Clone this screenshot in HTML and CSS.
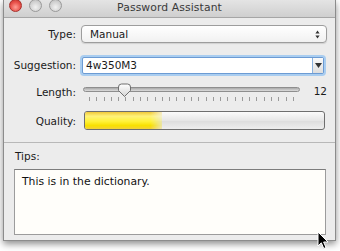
FILE: index.html
```html
<!DOCTYPE html>
<html>
<head>
<meta charset="utf-8">
<link rel="stylesheet" href="styles.css">
</head>
<body>
<div class="window">
  <div class="titlebar">
    <div class="lights">
      <span class="light red"></span>
      <span class="light"></span>
      <span class="light"></span>
    </div>
    <div class="title">Password Assistant</div>
  </div>
  <div class="top">
    <div class="row row-type">
      <span class="lbl">Type:</span>
      <div class="popup">
        <span class="popup-text">Manual</span>
        <svg class="updown" width="5" height="9" viewBox="0 0 5 9"><path d="M2.5 0.5 L4.6 3.4 H0.4 Z M2.5 8.5 L4.6 5.6 H0.4 Z" fill="#333"/></svg>
      </div>
    </div>
    <div class="row row-sugg">
      <span class="lbl">Suggestion:</span>
      <div class="combo">
        <span class="combo-text">4w350M3</span>
        <span class="combo-btn"><svg width="7" height="5" viewBox="0 0 7 5"><path d="M0 0 H7 L3.5 5 Z" fill="#333"/></svg></span>
      </div>
    </div>
    <div class="row row-len">
      <span class="lbl">Length:</span>
      <div class="len-ctl">
        <div class="slider">
          <div class="track"></div>
          <svg class="knob" width="15" height="15" viewBox="0 0 15 15">
            <defs><linearGradient id="kg" x1="0" y1="0" x2="0" y2="1"><stop offset="0" stop-color="#ffffff"/><stop offset="1" stop-color="#d4d4d4"/></linearGradient></defs>
            <path d="M1.5 4 Q1.5 1 4.5 1 H10.5 Q13.5 1 13.5 4 V7.5 L7.5 13.5 L1.5 7.5 Z" fill="url(#kg)" stroke="#6f6f6f" stroke-width="1"/>
          </svg>
          <div class="ticks">
            <i></i><i></i><i></i><i></i><i></i><i></i><i></i><i></i><i></i><i></i>
            <i></i><i></i><i></i><i></i><i></i><i></i><i></i><i></i><i></i><i></i>
            <i></i><i></i><i></i><i></i><i></i><i></i><i></i><i></i><i></i>
          </div>
        </div>
        <span class="val">12</span>
      </div>
    </div>
    <div class="row row-q">
      <span class="lbl">Quality:</span>
      <div class="meter"><div class="fill" style="width:77px"></div></div>
    </div>
  </div>
  <div class="bottom">
    <div class="tips-label">Tips:</div>
    <div class="tips">This is in the dictionary.</div>
  </div>
</div>
<svg class="cursor" width="13" height="19" viewBox="0 0 13 19">
  <path d="M1 1 L1 15 L4.3 11.8 L6.8 17.5 L9 16.5 L6.6 11 L11 11 Z" fill="#000" stroke="#fff" stroke-width="1" stroke-linejoin="round"/>
</svg>
</body>
</html>
```
FILE: styles.css
```css
html, body {
  margin: 0;
  padding: 0;
  background: #ffffff;
}
body {
  width: 340px;
  height: 251px;
  overflow: hidden;
  position: relative;
  font-family: "DejaVu Sans", sans-serif;
  font-size: 10.5px;
  color: #1a1a1a;
}
.window {
  margin-left: 3px;
  width: 331px;
  height: 240px;
  border: 1px solid #8c8c8c;
  border-top: none;
  background: #ececec;
  box-shadow: 0 3px 7px rgba(0, 0, 0, 0.45);
  display: flex;
  flex-direction: column;
}
.titlebar {
  height: 17px;
  flex: none;
  border-bottom: 1px solid #a6a6a6;
  background: linear-gradient(#e4e4e4, #cfcfcf);
  position: relative;
  display: flex;
  align-items: center;
}
.lights {
  display: flex;
  gap: 7px;
  margin-left: 5px;
  margin-top: -6px;
}
.light {
  width: 11px;
  height: 11px;
  border-radius: 50%;
  border: 1px solid #9a9a9a;
  background: radial-gradient(circle at 50% 65%, #f2f2f2 0%, #d0d0d0 60%, #b8b8b8 100%);
}
.light.red {
  border-color: #a8302c;
  background: radial-gradient(circle at 50% 65%, #ff9f95 0%, #e8514a 55%, #c2312b 100%);
}
.title {
  position: absolute;
  left: 0;
  right: 0;
  top: 1px;
  text-align: center;
  font-size: 10.8px;
  color: #3a3a3a;
  letter-spacing: 0.1px;
}
.top {
  padding: 7px 10px 12px 0;
  border-bottom: 1px solid #b8b8b8;
  display: flex;
  flex-direction: column;
}
.row {
  display: grid;
  grid-template-columns: 72px 1fr;
  column-gap: 5px;
  align-items: center;
}
.lbl {
  text-align: right;
}
.row-type { height: 18px; }
.row-sugg { height: 20px; margin-top: 12px; }
.row-len { height: 20px; margin-top: 7px; }
.row-q { height: 19px; margin-top: 9px; }

.popup {
  height: 16px;
  margin-right: -2px;
  border: 1px solid #9d9d9d;
  border-radius: 4px;
  background: linear-gradient(#ffffff, #f1f1f1);
  box-shadow: 0 1px 1px rgba(0, 0, 0, 0.12);
  display: flex;
  align-items: center;
  padding: 0 6px 0 8px;
}
.popup-text { flex: 1; }
.updown { display: block; }

.combo {
  height: 15px;
  margin: 0 1px 0 1px;
  border: 1px solid #6c9bd3;
  box-shadow: 0 0 0 2px #a9cdf0;
  border-radius: 2px;
  background: #ffffff;
  display: flex;
  align-items: stretch;
}
.combo-text {
  flex: 1;
  padding-left: 3px;
  display: flex;
  align-items: center;
}
.combo-btn {
  width: 10px;
  border-left: 1px solid #8bb2de;
  background: linear-gradient(#fafafa, #dedede);
  display: flex;
  align-items: center;
  justify-content: center;
}

.len-ctl {
  display: flex;
  align-items: flex-start;
  height: 20px;
}
.slider {
  width: 223px;
  height: 20px;
  position: relative;
}
.track {
  margin: 5px 4px 0 2px;
  height: 3px;
  border: 1px solid #8e8e8e;
  border-radius: 3px;
  background: linear-gradient(#a9a9a9, #dcdcdc);
}
.knob {
  position: absolute;
  left: 36px;
  top: 1px;
}
.ticks {
  display: flex;
  justify-content: space-between;
  margin: 5px 0 0 8px;
  width: 205px;
  height: 4px;
}
.ticks i {
  width: 1px;
  height: 4px;
  background: #9a9a9a;
}
.val {
  margin-left: auto;
  margin-right: -2px;
  margin-top: 3px;
}

.meter {
  margin-left: 3px;
  height: 17px;
  border: 1px solid #6e6e6e;
  border-radius: 3px;
  background: linear-gradient(#fbfbfb, #e6e6e6 50%, #dcdcdc 51%, #eeeeee);
  overflow: hidden;
}
.fill {
  height: 100%;
  background: linear-gradient(#f1c93a 0%, #fff27a 25%, #fff23a 55%, #f8e000 80%, #f3d23a 100%);
  -webkit-mask-image: linear-gradient(to right, #000 85%, rgba(0,0,0,0.3));
  mask-image: linear-gradient(to right, #000 85%, rgba(0,0,0,0.3));
}

.bottom {
  flex: 1;
  padding: 7px 9px 7px 10px;
  display: flex;
  flex-direction: column;
}
.tips-label {
  height: 13px;
  line-height: 13px;
  margin-left: 1px;
}
.tips {
  margin-top: 6px;
  height: 54px;
  border: 1px solid #9c9c9c;
  border-top-color: #7c7c7c;
  background: #fffefa;
  padding: 5px 7px;
  font-size: 10.8px;
  color: #111;
}
.cursor {
  position: absolute;
  left: 317px;
  top: 231px;
}
```
